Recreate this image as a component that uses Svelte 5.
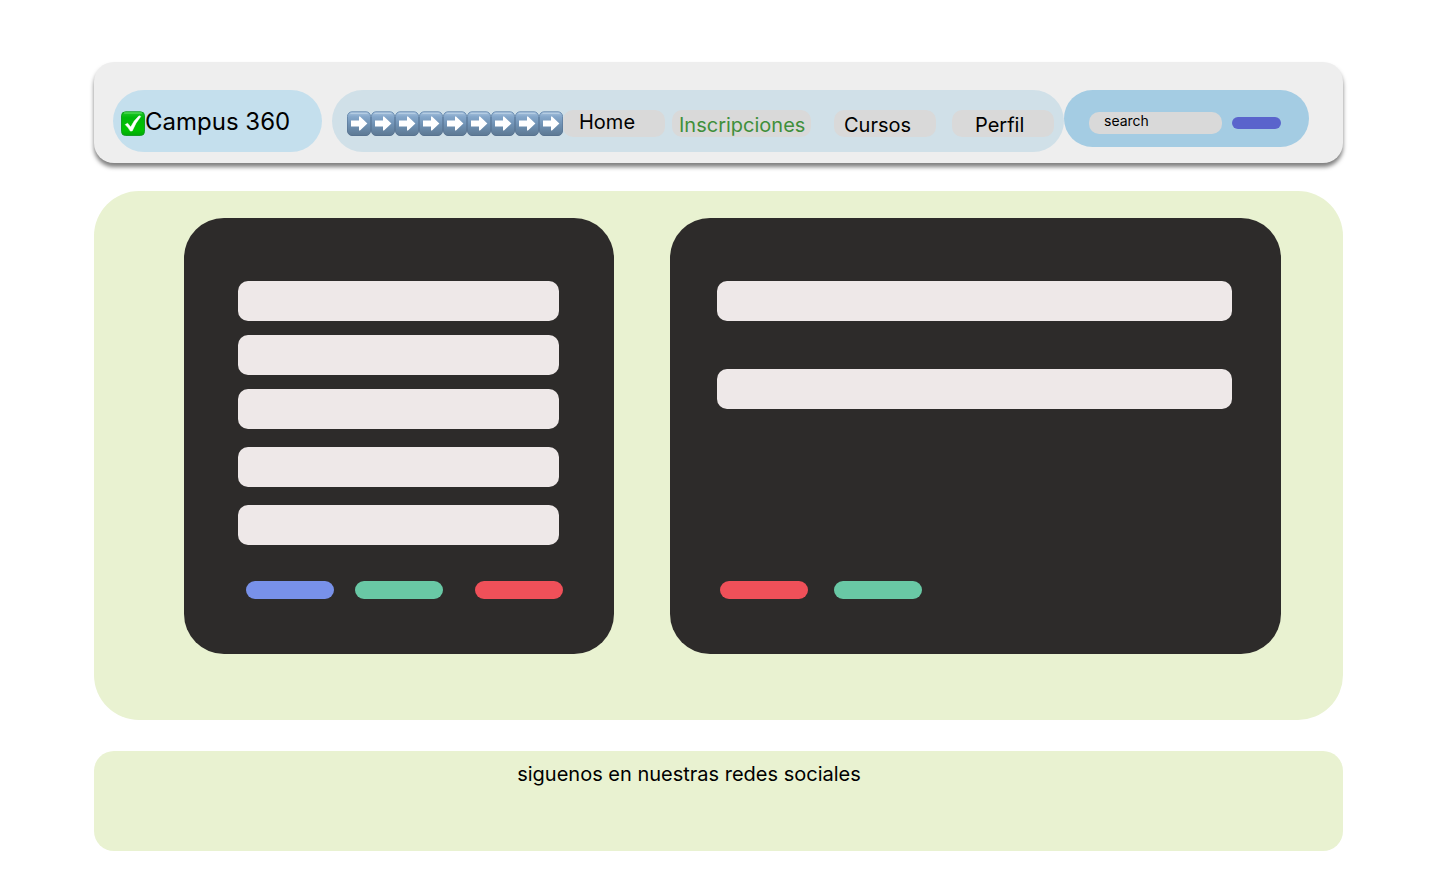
<script>
  const steps = Array.from({ length: 9 }, (_, i) => i);
  const links = [
    { label: 'Home', kind: 'home' },
    { label: 'Inscripciones', kind: 'enrol' },
    { label: 'Cursos', kind: 'courses' },
    { label: 'Perfil', kind: 'profile' }
  ];
  const fields = ['Nombre', 'Apellido', 'Correo', 'Curso', 'Horario'];
  const searchFields = ['Curso inscrito', 'Detalle'];
</script>

<div class="page">
  <header>
    <div class="brand">
      <svg class="check" viewBox="0 0 24 25" aria-hidden="true">
        <defs>
          <linearGradient id="green" x1="0" y1="0" x2="0" y2="1">
            <stop offset="0" stop-color="#21c92b" />
            <stop offset="0.25" stop-color="#00b80c" />
            <stop offset="0.75" stop-color="#00c400" />
            <stop offset="1" stop-color="#00a808" />
          </linearGradient>
        </defs>
        <rect x="0.5" y="0.8" width="23" height="23.7" rx="4" fill="url(#green)" stroke="#0a9a1b" stroke-width="0.9" />
        <path d="M3.5 2H20.5" stroke="#62df68" stroke-linecap="round" />
        <path d="M4.2 13.6 6.6 12.2 9.7 16Q12.9 9.3 18 4.8L19.8 5.4Q14.4 11.8 11.2 20L9.3 20.1Q7.2 16.4 4.2 13.6Z" fill="#fff" stroke="#fff" stroke-width="0.5" stroke-linejoin="round" />
      </svg>
      <span>Campus 360</span>
    </div>

    <nav aria-label="Principal">
      <svg class="arrows" viewBox="0 0 216 25" aria-hidden="true">
        <defs>
          <linearGradient id="steel" x1="0" y1="0" x2="0" y2="1">
            <stop offset="0" stop-color="#a9c4de" />
            <stop offset="0.2" stop-color="#86a8cb" />
            <stop offset="0.55" stop-color="#6f91b3" />
            <stop offset="1" stop-color="#5d7993" />
          </linearGradient>
          <linearGradient id="rim" x1="0" y1="0" x2="0" y2="1">
            <stop offset="0" stop-color="#6c8fb3" />
            <stop offset="1" stop-color="#587390" />
          </linearGradient>
        </defs>
        {#each steps as i}
          <g transform="translate({i * 24} 0)">
            <rect x="0.5" y="0.8" width="23" height="23.7" rx="4.5" fill="url(#steel)" stroke="url(#rim)" />
            <path d="M4 2.4H20" stroke="#b4cce2" stroke-width="1.2" stroke-linecap="round" />
            <path d="M4 9.5H12V5.5H13L20.4 12.5 13 19.4H12V15.6H4Z" fill="#fff" />
          </g>
        {/each}
      </svg>
      {#each links as link}
        <a href="#{link.kind}" class={link.kind}>{link.label}</a>
      {/each}
    </nav>

    <form class="search">
      <input type="text" placeholder="search" aria-label="search" />
      <button type="button" aria-label="Buscar"></button>
    </form>
  </header>

  <main>
    <form class="card enrolment">
      <div class="fields">
        {#each fields as field}
          <input type="text" aria-label={field} />
        {/each}
      </div>
      <div class="actions">
        <button type="button" class="blue" aria-label="Editar"></button>
        <button type="button" class="green" aria-label="Guardar"></button>
        <button type="button" class="red" aria-label="Eliminar"></button>
      </div>
    </form>

    <form class="card detail">
      <div class="fields">
        {#each searchFields as field}
          <input type="text" aria-label={field} />
        {/each}
      </div>
      <div class="actions">
        <button type="button" class="red" aria-label="Cancelar"></button>
        <button type="button" class="green" aria-label="Aceptar"></button>
      </div>
    </form>
  </main>

  <footer>
    <p>siguenos en nuestras redes sociales</p>
  </footer>
</div>

<style>
  :global(body) {
    margin: 0;
    background: #fff;
  }

  .page,
  .page * {
    box-sizing: border-box;
  }

  .page {
    padding: 62px 97px 44px 94px;
    font-family: Inter, sans-serif;
    font-size: 20px;
    line-height: 24px;
    color: #000;
  }

  input,
  button {
    border: 0;
    margin: 0;
    padding: 0;
    font-family: inherit;
  }

  header {
    display: flex;
    align-items: flex-start;
    padding: 28px 34px 11px 19px;
    border-radius: 20px;
    background: #eee;
    box-shadow: 0 4px 4px rgba(0, 0, 0, 0.5);
  }

  .brand {
    display: flex;
    flex: none;
    width: 209px;
    height: 62px;
    margin-right: 10px;
    padding: 17px 8px;
    border-radius: 31px;
    background: #c4dfed;
    font-size: 24px;
    line-height: 29px;
    white-space: nowrap;
  }

  .check {
    flex: none;
    width: 24px;
    height: 25px;
    margin-top: 4px;
  }

  nav {
    display: flex;
    flex: 1;
    align-items: flex-start;
    height: 62px;
    padding: 20px 10px 0 15px;
    border-radius: 31px;
    background: #d0e0e8;
  }

  .arrows {
    flex: none;
    width: 216px;
    height: 25px;
    margin-top: 1px;
  }

  nav a {
    flex: none;
    width: 102px;
    height: 27px;
    border-radius: 10px;
    background: #d9d9d9;
    color: #000;
    text-decoration: none;
  }

  nav .home {
    padding-left: 16px;
  }

  nav .enrol {
    width: 139px;
    margin-left: 7px;
    padding: 3px 0 0 7px;
    color: #3f8f3b;
  }

  nav .courses {
    margin-left: auto;
    padding: 3px 0 0 10px;
  }

  nav .profile {
    margin-left: 16px;
    padding: 3px 0 0 23px;
  }

  .search {
    display: flex;
    flex: none;
    align-items: center;
    gap: 10px;
    width: 245px;
    height: 57px;
    padding: 8px 28px 0 25px;
    border-radius: 29px;
    background: #a4cce3;
  }

  .search input {
    flex: 1;
    min-width: 0;
    height: 22px;
    padding: 0 15px 4px;
    border-radius: 10px;
    background: #d9d9d9;
    font-size: 14px;
  }

  .search input::placeholder {
    color: #000;
    opacity: 1;
  }

  .search button {
    width: 49px;
    height: 12px;
    border-radius: 6px;
    background: #5a64cc;
  }

  main {
    display: grid;
    grid-template-columns: 430fr 611fr;
    gap: 56px;
    margin-top: 28px;
    padding: 27px 62px 66px 90px;
    border-radius: 45px;
    background: #e9f2d1;
  }

  .card {
    display: flex;
    flex-direction: column;
    justify-content: space-between;
    padding: 63px 49px 55px 47px;
    border-radius: 40px;
    background: #2d2b2a;
  }

  .fields {
    display: grid;
  }

  .fields input {
    width: 100%;
    height: 40px;
    padding: 0 12px;
    border-radius: 10px;
    background: #eee8e8;
    font-size: 16px;
  }

  .enrolment {
    padding-right: 51px;
    padding-left: 54px;
  }

  .enrolment .fields {
    gap: 14px;
    padding-right: 4px;
    margin-bottom: 36px;
  }

  .enrolment input:nth-child(n + 4) {
    margin-top: 4px;
  }

  .detail .fields {
    gap: 48px;
  }

  .actions {
    display: flex;
  }

  .actions button {
    width: 88px;
    height: 18px;
    border-radius: 9px;
  }

  .enrolment .actions {
    gap: 21px;
    padding-left: 8px;
  }

  .enrolment .red {
    margin-left: auto;
  }

  .detail .actions {
    gap: 26px;
    padding-left: 3px;
  }

  .blue {
    background: #7891e9;
  }

  .green {
    background: #69c8a5;
  }

  .red {
    background: #ef5059;
  }

  footer {
    min-height: 100px;
    margin-top: 31px;
    padding: 11px 59px 0 0;
    border-radius: 20px;
    background: #e9f2d1;
    text-align: center;
  }

  footer p {
    margin: 0;
  }
</style>
